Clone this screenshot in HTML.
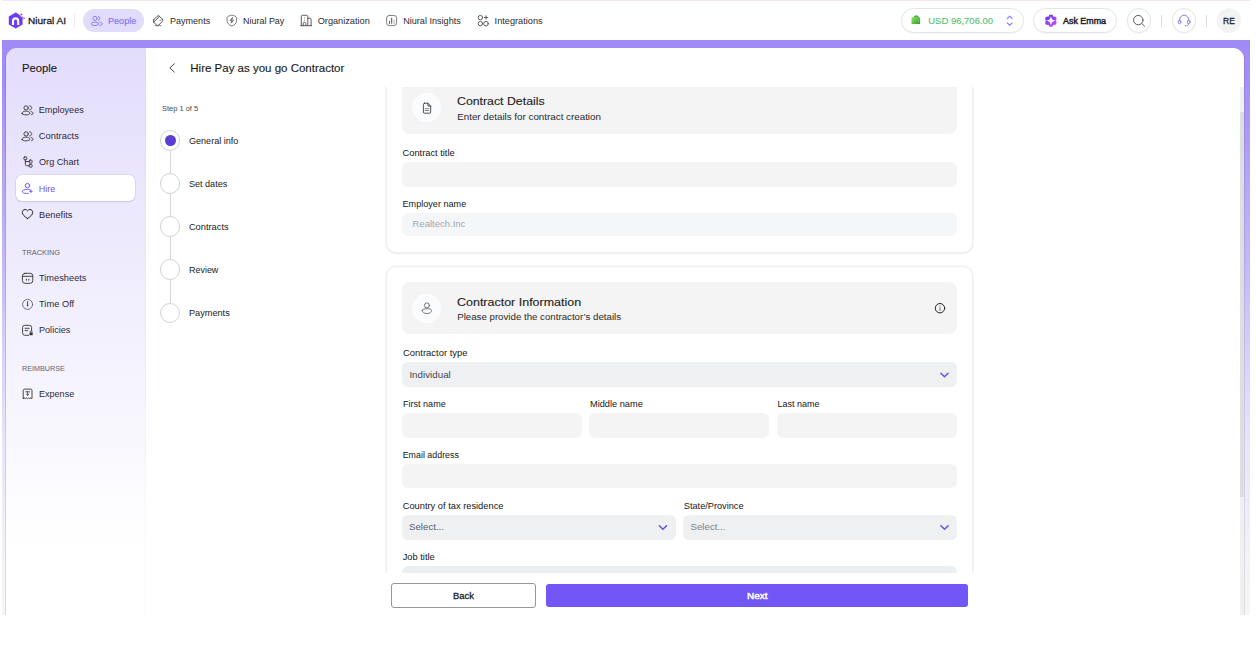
<!DOCTYPE html>
<html lang="en">
<head>
<meta charset="utf-8">
<title>Hire Pay as you go Contractor</title>
<style>
*{box-sizing:border-box;margin:0;padding:0}
html,body{width:1256px;height:654px;overflow:hidden;background:#fff}
body{font-family:"Liberation Sans",Arial,sans-serif;color:#222;position:relative;font-size:10px}
.abs{position:absolute}
.t{position:absolute;white-space:nowrap;line-height:1;transform-origin:0 0}
#topline{left:2px;top:0;width:1248px;height:1px;background:#f6e6ec}
#band{left:2px;top:40px;width:1248px;height:575px;background:linear-gradient(180deg,#a08af6 0%,#a68ff6 8%,#c6b9f9 40%,#d9d1fb 55%,#e8e4fc 70%,#f3f2f8 90%,#f6f6f6 100%)}
#side{left:6px;top:48px;width:139.5px;height:567px;border-top-left-radius:11px;background:linear-gradient(180deg,#e3ddfc 0%,#ffffff 88%)}
#main{left:145.5px;top:48px;width:1098.5px;height:567px;background:#fff;border-top-right-radius:11px}
.inp{position:absolute;background:#f4f4f4;border-radius:6px}
.sel{position:absolute;background:#eef0f1;border-radius:6px}
.card{position:absolute;border:1px solid #f0f0f0;border-radius:10px;background:#fff;box-shadow:0 0 2px rgba(0,0,0,.10),0 1px 1.5px rgba(0,0,0,.05)}
.hdr{position:absolute;background:#f4f4f4;border-radius:8px}
.circ{position:absolute;border-radius:50%}
.pill{position:absolute;border:1px solid #e6e6e6;border-radius:13px;background:#fff;box-shadow:0 1px 1px rgba(0,0,0,.04)}
.step{position:absolute;width:20.4px;height:20.4px;border-radius:50%;border:1.2px solid #d3d3d3;background:#fff;left:160px}
.sline{position:absolute;width:1.2px;background:#d6d6d6;left:169.6px}
.vdiv{position:absolute;width:1px;background:#ededed}
svg{position:absolute;overflow:visible}
</style>
</head>

<body>
<div id="topline" class="abs"></div>
<div id="band" class="abs"></div>
<div id="side" class="abs"></div>
<div id="main" class="abs"></div>

<div class="abs" style="left:5px;top:56px;width:1px;height:559px;background:rgba(0,0,0,.11)"></div>
<div class="abs" style="left:1244px;top:56px;width:1px;height:559px;background:rgba(0,0,0,.09)"></div>
<div class="abs" style="left:145px;top:60px;width:1px;height:555px;background:rgba(0,0,0,.025)"></div>
<!-- navbar shapes -->
<div class="vdiv" style="left:74px;top:14px;height:13px"></div>
<div class="abs" style="left:83px;top:8.8px;width:61px;height:23.6px;border-radius:12px;background:#e1dcfb"></div>
<div class="pill" style="left:900.6px;top:8.2px;width:123.6px;height:24.8px"></div>
<div class="pill" style="left:1033px;top:8.2px;width:84.2px;height:24.8px"></div>
<div class="pill" style="left:1126.8px;top:8.2px;width:24.6px;height:24.6px;border-radius:50%"></div>
<div class="vdiv" style="left:1161px;top:14.5px;height:12.5px;background:#dcdcdc"></div>
<div class="pill" style="left:1171.6px;top:8.2px;width:24.6px;height:24.6px;border-radius:50%"></div>
<div class="vdiv" style="left:1206px;top:14.5px;height:12.5px;background:#dcdcdc"></div>
<div class="circ" style="left:1217px;top:8.4px;width:24.2px;height:24.2px;background:#f3f3f3"></div>

<!-- sidebar active item -->
<div class="abs" style="left:16px;top:175.4px;width:118.8px;height:25.6px;border-radius:6px;background:#fff;box-shadow:0 0 0 0.6px rgba(110,90,210,.18),0 1px 1.5px rgba(110,90,210,.16)"></div>

<!-- stepper -->
<div class="sline" style="top:150px;height:24px"></div>
<div class="sline" style="top:193px;height:24px"></div>
<div class="sline" style="top:236px;height:24px"></div>
<div class="sline" style="top:279px;height:24px"></div>
<div class="step" style="top:130.4px"></div>
<div class="circ" style="left:164.8px;top:135.2px;width:10.8px;height:10.8px;background:#5a3fd2"></div>
<div class="step" style="top:173.2px"></div>
<div class="step" style="top:216.2px"></div>
<div class="step" style="top:259.4px"></div>
<div class="step" style="top:302.8px"></div>

<!-- scroll area -->
<div class="abs" id="scroll" style="left:380px;top:87px;width:600px;height:485.5px;overflow:hidden">
  <div class="card" style="left:5.6px;top:-20px;width:587.4px;height:185.6px"></div>
  <div class="hdr" style="left:22px;top:-10px;width:555.3px;height:56.9px"></div>
  <div class="circ" style="left:32.2px;top:6.3px;width:29px;height:29px;background:#fbfcfd"></div>
  <div class="inp" style="left:22px;top:75px;width:555.3px;height:24.8px"></div>
  <div class="inp" style="left:22px;top:126px;width:555.3px;height:23.4px;background:#f5f6f8"></div>

  <div class="card" style="left:5.6px;top:178.6px;width:587.4px;height:400px"></div>
  <div class="hdr" style="left:22px;top:195px;width:555.3px;height:52px"></div>
  <div class="circ" style="left:32.2px;top:206.7px;width:29px;height:29px;background:#fbfcfd"></div>
  <div class="sel" style="left:22px;top:275.3px;width:555.3px;height:24.3px"></div>
  <div class="inp" style="left:22px;top:326.2px;width:179.7px;height:24.6px"></div>
  <div class="inp" style="left:209.4px;top:326.2px;width:180px;height:24.6px"></div>
  <div class="inp" style="left:397.4px;top:326.2px;width:179.9px;height:24.6px"></div>
  <div class="inp" style="left:22px;top:377px;width:555.3px;height:24.3px"></div>
  <div class="sel" style="left:22px;top:428.2px;width:273.6px;height:24.6px"></div>
  <div class="sel" style="left:303.3px;top:428.2px;width:274px;height:24.6px"></div>
  <div class="sel" style="left:22px;top:478.8px;width:555.3px;height:24.6px;background:#eceff1"></div>
</div>

<!-- scrollbar -->
<div class="abs" style="left:1240px;top:87px;width:3.8px;height:528px;background:#eef0f1"></div>
<div class="abs" style="left:1240px;top:112px;width:3.8px;height:385px;background:#dddedf"></div>

<svg width="1256" height="654" viewBox="0 0 1256 654" style="left:0;top:0" fill="none" stroke-linecap="round" stroke-linejoin="round">
<defs>
<linearGradient id="gw" x1="0" y1="0" x2="1" y2="1"><stop offset="0" stop-color="#9be650"/><stop offset="1" stop-color="#2a9a3e"/></linearGradient>
<linearGradient id="gf" gradientUnits="userSpaceOnUse" x1="1045" y1="15" x2="1057" y2="27"><stop offset="0" stop-color="#5b3af8"/><stop offset="1" stop-color="#d94df0"/></linearGradient>
<clipPath id="cpay"><rect x="150" y="13" width="16" height="12.8"/></clipPath>
</defs>
<!-- logo -->
<g id="logo">
<path d="M15.7 12.6 L22.6 16.5 L22.6 24.6 L15.7 28.6 L8.8 24.6 L8.8 16.5Z" fill="#6a3df5"/>
<path d="M13 24.9 V21 a2.6 2.6 0 0 1 5.2 0 V24.9" stroke="#fff" stroke-width="2.1" stroke-linecap="butt"/>
<path d="M21.3 12 l0.65 1.75 l1.75 0.65 l-1.75 0.65 l-0.65 1.75 l-0.65 -1.75 l-1.75 -0.65 l1.75 -0.65z" fill="#6a3df5" stroke="#fff" stroke-width="0.8"/>
<path d="M24 16.900 l0.350 0.900 l0.900 0.350 l-0.900 0.350 l-0.350 0.900 l-0.350 -0.900 l-0.900 -0.350 l0.900 -0.350z" fill="#6a3df5"/>
</g>
<!-- nav people -->
<g stroke="#8f7cf3" stroke-width="1">
<circle cx="95" cy="18.4" r="2.1"/>
<path d="M98.4 16.5 a2.05 2.05 0 0 1 0 3.9"/>
<ellipse cx="94.9" cy="23.8" rx="3.7" ry="1.8"/>
<path d="M99.9 22.2 c1.5 0.2 2.4 0.8 2.4 1.6 s-0.9 1.4 -2.4 1.6"/>
</g>
<!-- payments -->
<g stroke="#4d4d4d" stroke-width="0.9" clip-path="url(#cpay)">
<g transform="translate(158 20.6) rotate(-45)">
<rect x="-4.15" y="-3.65" width="8.3" height="7.3" rx="1.8"/>
<path d="M-4.1 -1.9 H4.1"/>
<path d="M1.5 1.5 H2.6"/>
</g>
</g>
<path d="M155 25.7 H161" stroke="#4d4d4d" stroke-width="0.7"/>
<!-- niural pay shield -->
<g stroke="#666" stroke-width="0.85">
<path d="M227 18.300 c0 -1.200 0.300 -1.700 1.300 -2.050 l2.500 -0.900 c0.750 -0.270 1.250 -0.270 2 0 l2.500 0.900 c1 0.350 1.300 0.850 1.300 2.050 v2.200 c0 3 -2.400 4.700 -4.800 5.600 c-2.400 -0.900 -4.800 -2.600 -4.800 -5.600z"/>
<path d="M232.300 17.800 l-2.200 2.900 h1.600 l-0.400 2.400 l2.300 -3 h-1.700z" stroke="#555" stroke-width="0.8"/>
</g>
<!-- organization -->
<g stroke="#4a4a4a" stroke-width="0.9">
<path d="M301.3 25.7 V16.6 a1.3 1.3 0 0 1 1.3 -1.3 h3.9 a1.3 1.3 0 0 1 1.3 1.3 V25.7"/>
<path d="M307.8 18.2 h2 a1.3 1.3 0 0 1 1.3 1.3 v6.2"/>
<path d="M303.2 25.7 v-2.1 a1.3 1.3 0 0 1 2.6 0 v2.1"/>
<path d="M300.8 25.7 h10.8"/>
<path d="M304.5 18 v0.4 M304.5 20.2 v0.4" stroke="#999"/>
</g>
<!-- insights -->
<g stroke="#7a7a7a" stroke-width="1">
<rect x="386.6" y="15.4" width="10" height="10.2" rx="2.8"/>
<path d="M389.5 21.4 v2" stroke="#555"/>
<path d="M391.7 18.2 v5.2" stroke="#555"/>
<path d="M394.1 20 v3.4" stroke="#aaa"/>
</g>
<!-- integrations -->
<g stroke="#555" stroke-width="0.95">
<circle cx="480.4" cy="17.6" r="2.2"/>
<circle cx="480.4" cy="23.6" r="2.2"/>
<circle cx="486" cy="23.7" r="2.3"/>
<path d="M484.3 17.5 h3.4 M486 15.8 v3.4"/>
</g>
<!-- wallet -->
<circle cx="916.2" cy="17.8" r="2.6" fill="#42b660"/>
<rect x="911.5" y="17.2" width="8.6" height="6.9" rx="0.9" fill="url(#gw)"/>
<path d="M918.4 20.3 v1.4" stroke="#7fd27f" stroke-width="0.7"/>
<!-- up/down chevrons -->
<path d="M1007.3 18.6 l2.4 -2.5 l2.4 2.5 M1007.3 22.9 l2.4 2.5 l2.4 -2.5" stroke="#8c79f5" stroke-width="1.1"/>
<!-- flower -->
<g fill="url(#gf)"><circle cx="1050.90" cy="16.95" r="2.45"/><circle cx="1054.19" cy="18.85" r="2.45"/><circle cx="1054.19" cy="22.65" r="2.45"/><circle cx="1050.90" cy="24.55" r="2.45"/><circle cx="1047.61" cy="22.65" r="2.45"/><circle cx="1047.61" cy="18.85" r="2.45"/><circle cx="1050.9" cy="20.75" r="3.8"/></g>
<path d="M1050.9 16.45 l1.250 3.050 l3.050 1.250 l-3.050 1.250 l-1.250 3.050 l-1.250 -3.050 l-3.050 -1.250 l3.050 -1.250z" fill="#fff"/>
<!-- search -->
<g stroke="#505050" stroke-width="0.95">
<circle cx="1138.3" cy="20.1" r="4.7"/>
<path d="M1141.8 23.6 L1144.6 26.2"/>
</g>
<!-- headset -->
<g stroke="#8b76f6" stroke-width="1">
<path d="M1179.6 20.6 v-0.9 a4.5 4.5 0 0 1 9 0 v0.9"/>
<ellipse cx="1179.5" cy="21.9" rx="1.3" ry="1.9"/>
<ellipse cx="1188.7" cy="21.9" rx="1.3" ry="1.9"/>
<path d="M1188.7 23.8 c0 1.500 -1.400 2 -3.200 2"/>
</g>

<!-- sidebar icons -->
<g stroke="#333" stroke-width="0.9">
<g id="emp">
<circle cx="26.1" cy="107.9" r="2.15"/>
<path d="M29.6 105.800 c1.300 0.200 2.100 1.100 2.100 2.100 s-0.800 1.900 -2.100 2.100"/>
<path d="M22 113.400 c0 -1.300 1.700 -2.300 3.950 -2.300 s3.950 1 3.950 2.300 c0 0.900 -1.700 1.450 -3.950 1.450 s-3.950 -0.550 -3.950 -1.450z"/>
<path d="M31.100 111.500 c1.300 0.350 2 1.100 2 1.900 c0 0.600 -0.550 1.050 -1.500 1.300"/>
</g>
<g transform="translate(0 26)">
<circle cx="26.1" cy="107.9" r="2.15"/>
<path d="M29.6 105.800 c1.300 0.200 2.100 1.100 2.100 2.100 s-0.800 1.900 -2.100 2.100"/>
<path d="M22 113.400 c0 -1.300 1.700 -2.300 3.950 -2.300 s3.950 1 3.950 2.300 c0 0.900 -1.700 1.450 -3.950 1.450 s-3.950 -0.550 -3.950 -1.450z"/>
<path d="M31.100 111.500 c1.300 0.350 2 1.100 2 1.900 c0 0.600 -0.550 1.050 -1.500 1.300"/>
</g>
<!-- org chart -->
<rect x="23.9" y="156.900" width="2.9" height="2.9" rx="0.8"/>
<rect x="29.2" y="160.100" width="2.9" height="2.9" rx="0.8"/>
<rect x="29.2" y="164.300" width="2.9" height="2.9" rx="0.8"/>
<path d="M25.35 159.800 V164.400 a1.300 1.300 0 0 0 1.300 1.300 H29.2 M25.35 161.550 H29.2"/>
<!-- heart -->
<path d="M27.5 218.500 c-3 -1.900 -5.200 -3.900 -5.200 -6.100 c0 -1.700 1.300 -2.900 2.800 -2.900 c1 0 1.900 0.500 2.400 1.300 c0.500 -0.800 1.400 -1.300 2.400 -1.300 c1.500 0 2.800 1.200 2.800 2.900 c0 2.200 -2.200 4.200 -5.200 6.100z" stroke="#222" stroke-width="1"/>
<!-- timesheets -->
<rect x="22.4" y="273.300" width="10.4" height="10" rx="2.6"/>
<path d="M22.6 276.300 H32.6"/>
<path d="M26.4 279.300 v0.900 M28.8 279.300 v0.900" stroke-width="1"/>
<!-- time off -->
<circle cx="27.6" cy="304.400" r="5" stroke="#555" stroke-width="0.8"/>
<path d="M27.6 301.600 v3.200" stroke="#333" stroke-width="0.9"/>
<circle cx="27.6" cy="305.600" r="0.8" fill="#333" stroke="none"/>
<!-- policies -->
<path d="M28.6 335.300 h-3.800 a2.200 2.200 0 0 1 -2.200 -2.200 v-5.600 a2.200 2.200 0 0 1 2.200 -2.200 h4.600 a2.200 2.200 0 0 1 2.200 2.200 v3"/>
<path d="M25.1 328.300 h4.100 M25.1 330.600 h2.500"/>
<rect x="29.5" y="332.400" width="3.200" height="2.900" rx="0.600" fill="#333" stroke="none"/>
<path d="M30.2 332.400 v-0.700 a0.900 0.900 0 0 1 1.800 0 v0.700" stroke-width="0.7"/>
<!-- expense -->
<path d="M23.2 398.600 V390.600 a1.500 1.500 0 0 1 1.500 -1.500 h5.800 a1.500 1.500 0 0 1 1.500 1.500 V398.600 l-1.100 -0.700 l-1.100 0.700 l-1.100 -0.700 l-1.100 0.700 l-1.100 -0.700 l-1.100 0.700 l-1.100 -0.700z"/>
<path d="M25.700 391.800 h3.800 M27.600 391.800 v3.400 M26.400 394.100 l1.200 1.200 l1.200 -1.200" stroke-width="0.8"/>
</g>
<!-- hire icon -->
<g stroke="#6e54f4" stroke-width="0.95">
<circle cx="27.5" cy="185.600" r="2.2"/>
<path d="M28.300 193.400 h-1.700 c-2.600 0 -4.300 -0.800 -4.300 -2 s1.800 -2 5.200 -2 c0.700 0 1.300 0.050 1.900 0.120"/>
<path d="M30.900 189.500 l0.500 1.300 l1.300 0.500 l-1.300 0.500 l-0.500 1.300 l-0.500 -1.300 l-1.300 -0.500 l1.300 -0.500z" fill="#6e54f4" stroke-width="0.3"/>
</g>
<!-- back chevron -->
<path d="M174.200 63.800 l-4.300 4.100 l4.300 4.100" stroke="#444" stroke-width="1"/>

<!-- doc icon -->
<g stroke="#333" stroke-width="0.85">
<path d="M424.600 103.200 h3.300 l2.800 2.800 v6 a1.200 1.200 0 0 1 -1.200 1.200 h-4.900 a1.200 1.200 0 0 1 -1.200 -1.200 v-7.600 a1.200 1.200 0 0 1 1.200 -1.200z"/>
<path d="M427.900 103.200 v2.800 h2.800"/>
<path d="M425.100 108.700 h3.800 M425.100 110.500 h3.800" stroke="#8a8a8a" stroke-width="1.1"/>
</g>
<!-- person icon -->
<g stroke="#666" stroke-width="0.9">
<circle cx="426.900" cy="305.400" r="2.500"/>
<path d="M422.200 310.300 c0 -0.900 2 -1.600 4.700 -1.600 s4.700 0.700 4.700 1.600 c0 1.800 -2 3.300 -4.700 3.300 s-4.700 -1.500 -4.700 -3.300z"/>
</g>
<!-- info icon -->
<circle cx="940" cy="308.200" r="4.700" stroke="#222" stroke-width="1"/>
<path d="M940 307.700 v2.900" stroke="#777" stroke-width="1"/>
<circle cx="940" cy="305.900" r="0.600" fill="#777"/>
<!-- select chevrons -->
<g stroke="#6a4cf5" stroke-width="1.5">
<path d="M940.900 373.300 l3.600 3.500 l3.600 -3.500"/>
<path d="M659.300 525.700 l3.600 3.500 l3.600 -3.500"/>
<path d="M940.900 525.700 l3.600 3.500 l3.600 -3.500"/>
</g>
</svg>

<!-- text -->
<div class="t" id="a0" style="left:28.0px;top:16px;font-size:9.7px;-webkit-text-stroke:0.3px #1d1d1f;color:#1d1d1f;transform:scaleX(1.038)">Niural AI</div>
<div class="t" id="a1" style="left:108.0px;top:17px;font-size:9.1px;-webkit-text-stroke:0.14px #8672f1;color:#8672f1">People</div>
<div class="t" id="a2" style="left:169.5px;top:17px;font-size:9.0px;color:#2b2b2b;transform:scaleX(1.004)">Payments</div>
<div class="t" id="a3" style="left:243.2px;top:17px;font-size:9.0px;color:#2b2b2b;transform:scaleX(0.995)">Niural Pay</div>
<div class="t" id="a4" style="left:317.7px;top:17px;font-size:9.2px;color:#2b2b2b">Organization</div>
<div class="t" id="a5" style="left:403.2px;top:17px;font-size:9.1px;color:#2b2b2b">Niural Insights</div>
<div class="t" id="a6" style="left:494.6px;top:17px;font-size:9.2px;color:#2b2b2b">Integrations</div>
<div class="t" id="a7" style="left:928.2px;top:16px;font-size:9.5px;-webkit-text-stroke:0.14px #56c474;color:#56c474">USD 96,706.00</div>
<div class="t" id="a8" style="left:1063.3px;top:17px;font-size:9.2px;-webkit-text-stroke:0.45px #1d1d1f;color:#1d1d1f;transform:scaleX(0.968)">Ask Emma</div>
<div class="t" id="a9" style="left:1223.2px;top:16px;font-size:9.6px;-webkit-text-stroke:0.3px #1d1d1f;color:#1d1d1f;transform:scaleX(0.885)">RE</div>
<div class="t" id="a10" style="left:21.9px;top:63px;font-size:11.3px;-webkit-text-stroke:0.14px #1a1a22;color:#1a1a22">People</div>
<div class="t" id="a11" style="left:38.8px;top:106px;font-size:9.1px;color:#2d2b38">Employees</div>
<div class="t" id="a12" style="left:38.8px;top:131px;font-size:9.4px;color:#2d2b38">Contracts</div>
<div class="t" id="a13" style="left:38.8px;top:158px;font-size:9.1px;color:#2d2b38;transform:scaleX(1.004)">Org Chart</div>
<div class="t" id="a14" style="left:38.8px;top:185px;font-size:9.0px;color:#6e54f4">Hire</div>
<div class="t" id="a15" style="left:38.8px;top:211px;font-size:9.2px;color:#2d2b38;transform:scaleX(1.006)">Benefits</div>
<div class="t" id="a16" style="left:22.2px;top:249px;font-size:7.4px;color:#63616d;transform:scaleX(0.995)">TRACKING</div>
<div class="t" id="a17" style="left:39.0px;top:274px;font-size:9.3px;color:#2d2b38;transform:scaleX(0.995)">Timesheets</div>
<div class="t" id="a18" style="left:39.0px;top:300px;font-size:9.3px;color:#2d2b38">Time Off</div>
<div class="t" id="a19" style="left:39.0px;top:326px;font-size:9.1px;color:#2d2b38">Policies</div>
<div class="t" id="a20" style="left:21.8px;top:365px;font-size:7.2px;color:#63616d;transform:scaleX(1.004)">REIMBURSE</div>
<div class="t" id="a21" style="left:38.8px;top:390px;font-size:9.0px;color:#2d2b38;transform:scaleX(1.005)">Expense</div>
<div class="t" id="a22" style="left:190.3px;top:63px;font-size:11.5px;-webkit-text-stroke:0.14px #1a1a1a;color:#1a1a1a">Hire Pay as you go Contractor</div>
<div class="t" id="a23" style="left:161.6px;top:105px;font-size:7.5px;color:#4a4a4a;transform:scaleX(0.995)">Step 1 of 5</div>
<div class="t" id="a24" style="left:188.9px;top:137px;font-size:9.1px;color:#222">General info</div>
<div class="t" id="a25" style="left:188.9px;top:180px;font-size:9.1px;color:#222">Set dates</div>
<div class="t" id="a26" style="left:188.9px;top:223px;font-size:9.3px;color:#222">Contracts</div>
<div class="t" id="a27" style="left:188.9px;top:266px;font-size:8.9px;color:#222;transform:scaleX(1.007)">Review</div>
<div class="t" id="a28" style="left:188.9px;top:309px;font-size:9.2px;color:#222">Payments</div>
<div class="t" id="a29" style="left:457.2px;top:96px;font-size:11.8px;-webkit-text-stroke:0.14px #1f1f1f;color:#1f1f1f;transform:scaleX(1.044)">Contract Details</div>
<div class="t" id="a30" style="left:457.2px;top:112px;font-size:9.8px;color:#2a2a2a">Enter details for contract creation</div>
<div class="t" id="a31" style="left:402.5px;top:149px;font-size:9.3px;color:#161616">Contract title</div>
<div class="t" id="a32" style="left:402.5px;top:200px;font-size:9.1px;color:#161616">Employer name</div>
<div class="t" id="a33" style="left:412.5px;top:219px;font-size:9.5px;color:#a3a7ad">Realtech.Inc</div>
<div class="t" id="a34" style="left:457.2px;top:297px;font-size:11.8px;-webkit-text-stroke:0.14px #1f1f1f;color:#1f1f1f;transform:scaleX(1.058)">Contractor Information</div>
<div class="t" id="a35" style="left:457.2px;top:312px;font-size:9.7px;color:#2a2a2a">Please provide the contractor’s details</div>
<div class="t" id="a36" style="left:402.5px;top:348px;font-size:9.4px;color:#161616;transform:scaleX(1.006)">Contractor type</div>
<div class="t" id="a37" style="left:409.4px;top:370px;font-size:9.8px;color:#444a50">Individual</div>
<div class="t" id="a38" style="left:402.5px;top:400px;font-size:9.1px;color:#161616;transform:scaleX(0.994)">First name</div>
<div class="t" id="a39" style="left:590.0px;top:400px;font-size:9.2px;color:#161616;transform:scaleX(1.004)">Middle name</div>
<div class="t" id="a40" style="left:777.6px;top:400px;font-size:9.0px;color:#161616">Last name</div>
<div class="t" id="a41" style="left:402.7px;top:451px;font-size:8.9px;color:#161616">Email address</div>
<div class="t" id="a42" style="left:402.7px;top:502px;font-size:9.3px;color:#161616">Country of tax residence</div>
<div class="t" id="a43" style="left:683.8px;top:502px;font-size:9.2px;color:#161616">State/Province</div>
<div class="t" id="a44" style="left:409.0px;top:522px;font-size:9.7px;color:#5a6068">Select...</div>
<div class="t" id="a45" style="left:690.5px;top:522px;font-size:9.7px;color:#7d838a">Select...</div>
<div class="t" id="a46" style="left:402.7px;top:553px;font-size:9.3px;color:#161616">Job title</div>
<!-- bottom bar -->
<div class="abs" style="left:386px;top:572.5px;width:588px;height:42.5px;background:#fff"></div>
<div class="abs" style="left:391px;top:583.4px;width:144.5px;height:24.4px;border:1px solid #969696;border-radius:3px;background:#fff"></div>
<div class="abs" style="left:545.7px;top:583.8px;width:422.5px;height:23.6px;border-radius:3px;background:#7357f6"></div>

<div class="t" id="b0" style="left:452.7px;top:591px;font-size:9.5px;-webkit-text-stroke:0.3px #222;color:#222;transform:scaleX(0.989)">Back</div>
<div class="t" id="b1" style="left:746.6px;top:591px;font-size:9.5px;-webkit-text-stroke:0.45px #fff;color:#fff;transform:scaleX(1.044)">Next</div>
</body>
</html>
